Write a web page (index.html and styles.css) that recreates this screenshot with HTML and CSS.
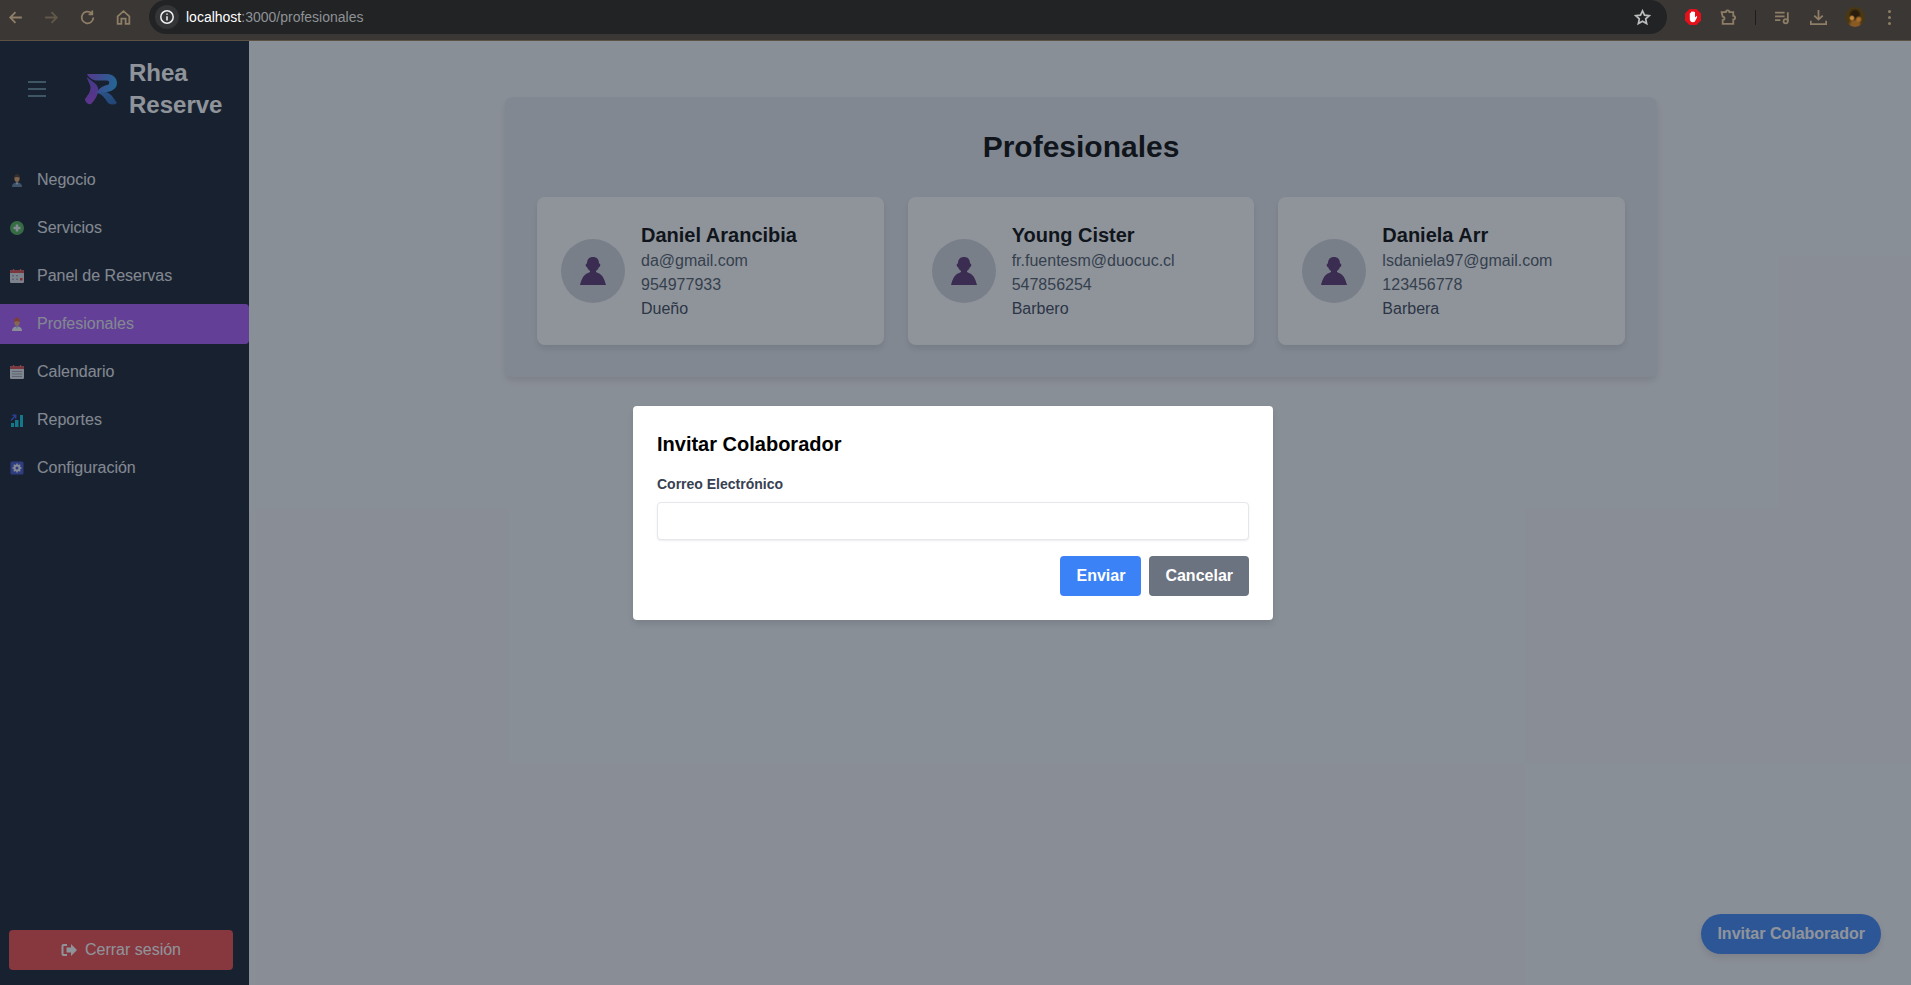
FILE: index.html
```html
<!DOCTYPE html>
<html lang="es">
<head>
  <meta charset="UTF-8" />
  <meta name="viewport" content="width=device-width, initial-scale=1.0" />
  <title>Profesionales - Rhea Reserve</title>
  <link rel="stylesheet" href="styles.css">
</head>
<body>

  <header class="browser-bar">
    <div class="browser-nav">
      <svg class="tool" viewBox="0 0 16 16"><path d="M14 8H3M8 3 3 8l5 5"/></svg>
      <svg class="tool dim" viewBox="0 0 16 16"><path d="M2 8h11M8 3l5 5-5 5"/></svg>
      <svg class="tool" viewBox="0 0 16 16"><path d="M13.5 8A5.5 5.5 0 1 1 11.8 4M12.5 1.5V5H9"/></svg>
      <svg class="tool" viewBox="0 0 16 16"><path d="M2.5 14V7L8 2l5.500 5v7h-3.500V9H6v5z"/></svg>
    </div>
    <div class="omnibox">
      <span class="site-info">
        <svg viewBox="0 0 16 16"><circle cx="8" cy="8" r="6.200"/><path d="M8 7.200V11.500M8 4.500v1.300"/></svg>
      </span>
      <span class="url"><b>localhost</b>:3000/profesionales</span>
      <svg class="star" viewBox="0 0 16 16"><path d="m8 1.800 1.900 4 4.400.5-3.300 3 .9 4.400L8 11.500l-3.900 2.200.9-4.400-3.300-3 4.400-.5z"/></svg>
    </div>
    <div class="browser-tools">
      <svg class="ext-stop" viewBox="0 0 18 18">
        <path class="octagon" d="M5.500 1h7L17 5.500v7L12.500 17h-7L1 12.500v-7z"/>
        <path class="hand" d="M5.800 8V5.500c0-1 1.200-1 1.200 0V4.300c0-1 1.300-1 1.300 0V4c0-1 1.400-1 1.400 0v.6c0-1 1.300-1 1.300 0v5l1-1c.8-.6 1.500.1 1 .9L11 13.300c-.5.600-1 .9-2 .9-2.200 0-3.200-1.200-3.200-3.200z"/>
      </svg>
      <svg class="tool puzzle" viewBox="0 0 16 16"><path d="M1.500 3h4a1.700 1.700 0 0 1 3.400 0h3.600v3.500a1.700 1.700 0 0 1 0 3.400V14H2.500v-3.500a1.700 1.700 0 0 0 0-3.400z"/></svg>
      <span class="tool-sep"></span>
      <svg class="tool music" viewBox="0 0 16 16"><path d="M1 3.500h9M1 7h9M1 10.500h5M13 3v8.500"/><circle cx="11" cy="11.500" r="2"/></svg>
      <svg class="tool download" viewBox="0 0 16 16"><path d="M8 1V10M4 6.200 8 10l4-3.800M.8 11v3.200h14.400V11"/></svg>
      <span class="profile-pic"></span>
      <span class="kebab"><i></i><i></i><i></i></span>
    </div>
  </header>

  <div class="app">
    <aside class="sidebar">
      <div class="side-head">
        <svg class="burger" viewBox="0 0 18 16"><path d="M0 1h18M0 8h18M0 15h18"/></svg>
        <svg class="logo" viewBox="0 0 32 32">
          <defs>
            <linearGradient id="lgA" x1="0" y1="0" x2="1" y2="0.200">
              <stop offset="0" stop-color="#8a46e0"/>
              <stop offset="1" stop-color="#2aa0f0"/>
            </linearGradient>
            <linearGradient id="lgL" x1="0" y1="0" x2="0" y2="1">
              <stop offset="0" stop-color="#6a4ad8"/>
              <stop offset="1" stop-color="#9a3ee0"/>
            </linearGradient>
            <linearGradient id="lgB" x1="0" y1="0" x2="1" y2="1">
              <stop offset="0" stop-color="#3f7fe0"/>
              <stop offset="1" stop-color="#1f5fb0"/>
            </linearGradient>
          </defs>
          <path d="M12 20C17 17 24 19 27 23 29 26 31 28 32 30 29 32 26 32 23 30 20 25 17 21 12 20z" fill="url(#lgB)"/>
          <path d="M2 4C6 8 12 10 13 15 14 21 10 27 6 31 3 32 0 29 0 26 3 22 7 17 5 12 4 9 2 7 2 4z" fill="url(#lgL)"/>
          <path d="M2 1H22C28 1 32 5 32 10 32 15 28 18 22 19 18 19 14 19 11 21 13 16 17 13 22 12 25 11.500 25 8 22 7.500H12C8 7.500 4 5 2 1z" fill="url(#lgA)"/>
        </svg>
        <div class="brand">Rhea Reserve</div>
      </div>

      <nav class="side-nav">
        <a class="nav-item">
          <svg class="nav-icon" viewBox="0 0 14 14">
            <path d="M2 14c0-3 1.500-4.500 5-4.500s5 1.500 5 4.500z" fill="#5f7f9f"/>
            <path d="M6 9.500h2L7 12z" fill="#fff"/>
            <ellipse cx="7" cy="5.500" rx="2.600" ry="3.400" fill="#e0a060"/>
            <path d="M4.300 5C4 2 5.500 1 7 1s3 1 2.700 4C8.500 3.800 5.500 3.800 4.300 5z" fill="#4a3320"/>
          </svg>
          Negocio
        </a>
        <a class="nav-item">
          <svg class="nav-icon" viewBox="0 0 14 14">
            <circle cx="7" cy="7" r="7" fill="#4caf50"/>
            <path d="M7 3.500v7M3.500 7h7" stroke="#e8ecef" stroke-width="2.400"/>
          </svg>
          Servicios
        </a>
        <a class="nav-item">
          <svg class="nav-icon" viewBox="0 0 14 14">
            <rect y="1" width="14" height="13" rx="1.200" fill="#d9dde3"/>
            <path d="M0 2.200a1.200 1.200 0 0 1 1.200-1.200h11.600a1.200 1.200 0 0 1 1.200 1.200V4H0z" fill="#d64545"/>
            <path d="M3.500 0v2M10.500 0v2" stroke="#c9656b" stroke-width="1.400"/>
            <path d="M2 6h2v1.500H2zM6 6h2v1.500H6zM2 9.500h2V11H2zM6 9.500h2V11H6z" fill="#9aa3ad"/>
            <path d="M10 9h2.500v2.500H10z" fill="#e53935"/>
          </svg>
          Panel de Reservas
        </a>
        <a class="nav-item active">
          <svg class="nav-icon" viewBox="0 0 14 14">
            <path d="M2 14c0-3 1.500-4.500 5-4.500s5 1.500 5 4.500z" fill="#f2f4f7"/>
            <path d="M6 9.500h2L7 12z" fill="#8fb4d9"/>
            <ellipse cx="7" cy="5.500" rx="2.600" ry="3.400" fill="#e8a468"/>
            <path d="M4.300 5.200C3.800 2 5.500.5 7 .5s3.200 1.500 2.700 4.700C8.500 3.800 5.500 3.800 4.300 5.200z" fill="#d9542b"/>
          </svg>
          Profesionales
        </a>
        <a class="nav-item">
          <svg class="nav-icon" viewBox="0 0 14 14">
            <rect y="1" width="14" height="13" rx="1.200" fill="#dfe3e8"/>
            <path d="M0 2.200a1.200 1.200 0 0 1 1.200-1.200h11.600a1.200 1.200 0 0 1 1.200 1.200V4H0z" fill="#d64545"/>
            <path d="M3.500 0v2M10.500 0v2" stroke="#c9656b" stroke-width="1.400"/>
            <path d="M2 6.500h10M2 9h10M2 11.500h10" stroke="#98a1ab"/>
          </svg>
          Calendario
        </a>
        <a class="nav-item">
          <svg class="nav-icon" viewBox="0 0 14 14">
            <path d="M1 10h3v4H1zM5 7h3.500v7H5zM10 2h3v12h-3z" fill="#05c8e0"/>
            <path d="M1 7.500 5 3M2.500 2.300H5.700v3.200" fill="none" stroke="#3555e8" stroke-width="1.400"/>
          </svg>
          Reportes
        </a>
        <a class="nav-item">
          <svg class="nav-icon" viewBox="0 0 14 14">
            <rect x=".5" y=".5" width="13" height="13" rx="1.500" fill="#3f51c9"/>
            <circle cx="7" cy="7" r="2.500" fill="none" stroke="#e6eaf5" stroke-width="2"/>
            <path d="M7 2.500v1.500M7 10v1.500M2.500 7H4M10 7h1.500M3.800 3.800l1 1M9.200 9.200l1 1M3.800 10.200l1-1M9.200 4.800l1-1" stroke="#e6eaf5" stroke-width="1.400"/>
          </svg>
          Configuración
        </a>
      </nav>

      <button class="logout">
        <svg viewBox="0 0 16 14"><path d="M6 1H2.500A2 2 0 0 0 .5 3v8a2 2 0 0 0 2 2H6v-2H2.500V3H6z"/><path d="M10 1 16 7l-6 6V9.500H5.500v-5H10z"/></svg>
        Cerrar sesión
      </button>
    </aside>

    <main class="content">
      <section class="panel">
        <h1>Profesionales</h1>
        <div class="pro-grid">
          <article class="pro-card">
            <div class="avatar">
              <svg viewBox="0 0 26 28"><path d="M13 0c3.500 0 6 2 6 6.500l1 .2c.6 1.400.4 2.800-1.200 3.600-.5 1.700-1.600 3-2.800 3.700v1l2.500 1.200c3.500 1.200 5.800 5 7.500 11.800H0c1.700-6.800 4-10.600 7.500-11.800L10 15v-1c-1.200-.7-2.300-2-2.800-3.700C5.600 9.500 5.400 8.100 6 6.700l1-.2C7 2 9.500 0 13 0z"/></svg>
            </div>
            <div class="pro-info">
              <h3>Daniel Arancibia</h3>
              <p>da@gmail.com</p>
              <p>954977933</p>
              <p class="role">Dueño</p>
            </div>
          </article>
          <article class="pro-card">
            <div class="avatar">
              <svg viewBox="0 0 26 28"><path d="M13 0c3.500 0 6 2 6 6.500l1 .2c.6 1.400.4 2.800-1.200 3.600-.5 1.700-1.600 3-2.800 3.700v1l2.500 1.200c3.500 1.200 5.800 5 7.500 11.800H0c1.700-6.800 4-10.600 7.500-11.800L10 15v-1c-1.200-.7-2.300-2-2.800-3.700C5.600 9.500 5.400 8.100 6 6.700l1-.2C7 2 9.500 0 13 0z"/></svg>
            </div>
            <div class="pro-info">
              <h3>Young Cister</h3>
              <p>fr.fuentesm@duocuc.cl</p>
              <p>547856254</p>
              <p class="role">Barbero</p>
            </div>
          </article>
          <article class="pro-card">
            <div class="avatar">
              <svg viewBox="0 0 26 28"><path d="M13 0c3.500 0 6 2 6 6.500l1 .2c.6 1.400.4 2.800-1.200 3.600-.5 1.700-1.600 3-2.800 3.700v1l2.500 1.200c3.500 1.200 5.800 5 7.500 11.800H0c1.700-6.800 4-10.600 7.500-11.800L10 15v-1c-1.200-.7-2.300-2-2.800-3.700C5.600 9.500 5.400 8.100 6 6.700l1-.2C7 2 9.500 0 13 0z"/></svg>
            </div>
            <div class="pro-info">
              <h3>Daniela Arr</h3>
              <p>lsdaniela97@gmail.com</p>
              <p>123456778</p>
              <p class="role">Barbera</p>
            </div>
          </article>
        </div>
      </section>

      <button class="fab">Invitar Colaborador</button>
    </main>

    <div class="overlay">
      <div class="modal">
        <h2>Invitar Colaborador</h2>
        <label for="inviteEmail">Correo Electrónico</label>
        <input type="email" id="inviteEmail" />
        <div class="modal-actions">
          <button class="btn btn-blue">Enviar</button>
          <button class="btn btn-gray">Cancelar</button>
        </div>
      </div>
    </div>
  </div>

</body>
</html>
```

FILE: styles.css
```css
* {
  box-sizing: border-box;
}
html, body {
  height: 100%;
}
body {
  margin: 0;
  display: flex;
  flex-direction: column;
  overflow: hidden;
  font-family: "Liberation Sans", Arial, sans-serif;
  background: #f3f4f6;
}

/* browser toolbar */
.browser-bar {
  flex: none;
  height: 41px;
  display: flex;
  align-items: flex-start;
  background: #3b3735;
  border-bottom: 1px solid #5b5243;
}
.browser-nav {
  width: 149px;
  height: 34px;
  display: flex;
  align-items: center;
  gap: 19px;
  padding-left: 7px;
}
.tool {
  width: 17px;
  height: 17px;
  fill: none;
  stroke: #8e7e66;
  stroke-width: 1.700;
}
.tool.dim {
  stroke: #625849;
}
.omnibox {
  width: 1518px;
  height: 34px;
  display: flex;
  align-items: center;
  padding: 0 6px;
  background: #212325;
  border-radius: 17px;
}
.site-info {
  width: 24px;
  height: 24px;
  display: flex;
  align-items: center;
  justify-content: center;
  border-radius: 50%;
  background: #333537;
}
.site-info svg {
  width: 16px;
  height: 16px;
  fill: none;
  stroke: #f2f2f2;
  stroke-width: 1.500;
}
.url {
  margin-left: 7px;
  font-size: 14px;
  color: #8f9295;
}
.url b {
  font-weight: normal;
  color: #fff;
}
.star {
  width: 17px;
  height: 17px;
  margin-left: auto;
  margin-right: 10px;
  fill: none;
  stroke: #bdbdbd;
  stroke-width: 1.600;
}
.browser-tools {
  flex: 1;
  height: 34px;
  display: flex;
  align-items: center;
  padding-left: 17px;
}
.ext-stop {
  width: 18px;
  height: 18px;
}
.octagon {
  fill: #e5111a;
}
.hand {
  fill: #fff;
}
.puzzle {
  margin-left: 18px;
}
.tool-sep {
  width: 1px;
  height: 15px;
  margin-left: 18px;
  background: #1d1d1f;
}
.music {
  margin-left: 18px;
}
.download {
  margin-left: 19px;
}
.profile-pic {
  width: 20px;
  height: 20px;
  margin-left: 18px;
  border-radius: 50%;
  background:
    radial-gradient(circle at 35% 55%, #c98a3e 0 8%, transparent 18%),
    radial-gradient(circle at 68% 62%, #a86a2a 0 8%, transparent 20%),
    radial-gradient(circle at 50% 38%, #2a1c0c 0 22%, transparent 40%),
    radial-gradient(circle at 50% 90%, #8a5a24 0 18%, transparent 35%),
    #4a3814;
}
.kebab {
  display: flex;
  flex-direction: column;
  gap: 3px;
  margin-left: 23px;
}
.kebab i {
  width: 3px;
  height: 3px;
  border-radius: 50%;
  background: #8e7e66;
}

/* app */
.app {
  flex: 1;
  min-height: 0;
  position: relative;
  display: flex;
}
.sidebar {
  flex: none;
  width: 249px;
  display: flex;
  flex-direction: column;
  background: #111827;
  color: #e5e7eb;
}
.side-head {
  display: flex;
  align-items: center;
  padding: 16px 0 16px 28px;
}
.burger {
  width: 18px;
  height: 16px;
  fill: none;
  stroke: #5f8590;
  stroke-width: 1.800;
}
.logo {
  width: 32px;
  height: 32px;
  margin-left: 39px;
}
.brand {
  width: 100px;
  margin-left: 12px;
  font-size: 24px;
  font-weight: bold;
  line-height: 32px;
  color: #fff;
}
.side-nav {
  flex: 1;
  display: flex;
  flex-direction: column;
  gap: 8px;
  padding-top: 23px;
}
.nav-item {
  height: 40px;
  display: flex;
  align-items: center;
  gap: 13px;
  padding-left: 10px;
  border-radius: 0 4px 4px 0;
  font-size: 16px;
}
.nav-item.active {
  background: #a855f7;
}
.nav-icon {
  width: 14px;
  height: 14px;
}
.logout {
  height: 40px;
  margin: 0 16px 15px 9px;
  display: flex;
  align-items: center;
  justify-content: center;
  gap: 8px;
  border: none;
  border-radius: 4px;
  background: #ef4444;
  color: #fff;
  font-family: inherit;
  font-size: 16px;
}
.logout svg {
  width: 16px;
  height: 14px;
  fill: #fff;
}

/* content */
.content {
  flex: 1;
  min-width: 0;
  position: relative;
  padding: 56px 0 0 2px;
}
.panel {
  width: 1152px;
  margin: 0 auto;
  padding: 32px;
  border-radius: 8px;
  background: #e5e7eb;
  box-shadow: 0 4px 6px rgba(0, 0, 0, 0.1);
}
.panel h1 {
  margin: 0 0 32px;
  font-size: 30px;
  line-height: 36px;
  text-align: center;
  color: #000;
}
.pro-grid {
  display: grid;
  grid-template-columns: repeat(3, 1fr);
  gap: 24px;
}
.pro-card {
  display: flex;
  align-items: center;
  gap: 16px;
  padding: 24px;
  border-radius: 8px;
  background: #fff;
  box-shadow: 0 4px 6px rgba(0, 0, 0, 0.1);
}
.avatar {
  width: 64px;
  height: 64px;
  flex: none;
  display: flex;
  align-items: center;
  justify-content: center;
  border-radius: 50%;
  background: #d1d5db;
}
.avatar svg {
  width: 26px;
  height: 28px;
  fill: #572f6d;
}
.pro-info h3 {
  margin: 0;
  font-size: 20px;
  line-height: 28px;
  color: #000;
}
.pro-info p {
  margin: 0;
  font-size: 16px;
  line-height: 24px;
  color: #4b5563;
}
.pro-info .role {
  color: #374151;
}
.fab {
  position: absolute;
  right: 30px;
  bottom: 31px;
  height: 40px;
  padding: 0 16px;
  border: none;
  border-radius: 20px;
  background: #3b82f6;
  color: #fff;
  font-family: inherit;
  font-size: 16px;
  font-weight: bold;
  box-shadow: 0 4px 6px rgba(0, 0, 0, 0.1);
}

/* modal */
.overlay {
  position: absolute;
  inset: 0;
  display: flex;
  align-items: center;
  justify-content: center;
  padding-right: 5px;
  background: rgba(31, 41, 55, 0.5);
}
.modal {
  width: 640px;
  padding: 24px;
  border-radius: 4px;
  background: #fff;
  box-shadow: 0 4px 6px rgba(0, 0, 0, 0.1);
}
.modal h2 {
  margin: 0 0 16px;
  font-size: 20px;
  line-height: 28px;
  color: #000;
}
.modal label {
  display: block;
  margin-bottom: 8px;
  font-size: 14px;
  font-weight: bold;
  line-height: 20px;
  color: #374151;
}
.modal input {
  display: block;
  width: 100%;
  height: 38px;
  border: 1px solid #e5e7eb;
  border-radius: 4px;
  background: #fff;
  box-shadow: 0 1px 2px rgba(0, 0, 0, 0.08);
}
.modal-actions {
  display: flex;
  justify-content: flex-end;
  gap: 8px;
  margin-top: 16px;
}
.btn {
  height: 40px;
  padding: 0 16px;
  border: none;
  border-radius: 4px;
  color: #fff;
  font-family: inherit;
  font-size: 16px;
  font-weight: bold;
}
.btn-blue {
  background: #3b82f6;
}
.btn-gray {
  background: #6b7280;
}
```
